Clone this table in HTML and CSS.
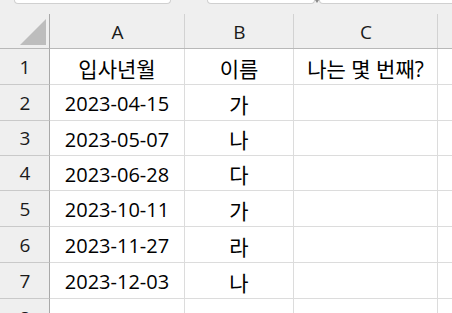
FILE: index.html
```html
<!DOCTYPE html>
<html lang="ko">
<head>
<meta charset="utf-8">
<link rel="stylesheet" href="styles.css">
</head>
<body>
<div class="top">
  <div class="box box-name"></div>
  <div class="box box-mid"></div>
  <div class="notch"></div>
  <div class="box box-formula"></div>
</div>
<div class="sheet">
  <div class="corner"><svg width="49" height="34" viewBox="0 0 49 34"><polygon points="20,31 46,5 46,31" fill="#bdbdbd"/></svg></div>
  <div class="colhead">A</div>
  <div class="colhead">B</div>
  <div class="colhead">C</div>
  <div class="colhead last"></div>

  <div class="rowhead">1</div>
  <div class="cell ko">입사년월</div>
  <div class="cell ko">이름</div>
  <div class="cell ko">나는 몇 번째?</div>
  <div class="cell last"></div>

  <div class="rowhead">2</div>
  <div class="cell">2023-04-15</div>
  <div class="cell ko">가</div>
  <div class="cell"></div>
  <div class="cell last"></div>

  <div class="rowhead">3</div>
  <div class="cell">2023-05-07</div>
  <div class="cell ko">나</div>
  <div class="cell"></div>
  <div class="cell last"></div>

  <div class="rowhead">4</div>
  <div class="cell">2023-06-28</div>
  <div class="cell ko">다</div>
  <div class="cell"></div>
  <div class="cell last"></div>

  <div class="rowhead">5</div>
  <div class="cell">2023-10-11</div>
  <div class="cell ko">가</div>
  <div class="cell"></div>
  <div class="cell last"></div>

  <div class="rowhead">6</div>
  <div class="cell">2023-11-27</div>
  <div class="cell ko">라</div>
  <div class="cell"></div>
  <div class="cell last"></div>

  <div class="rowhead">7</div>
  <div class="cell">2023-12-03</div>
  <div class="cell ko">나</div>
  <div class="cell"></div>
  <div class="cell last"></div>

  <div class="rowhead partial"><span>8</span></div>
  <div class="cell"></div>
  <div class="cell"></div>
  <div class="cell"></div>
  <div class="cell last"></div>
</div>
</body>
</html>
```
FILE: styles.css
```css
html, body {
  margin: 0;
  padding: 0;
  background: #ffffff;
  overflow: hidden;
}
body {
  width: 452px;
  height: 313px;
  font-family: "Open Sans", "Noto Sans CJK KR", sans-serif;
  color: #000;
}
.top {
  height: 14px;
  background: #efefef;
  display: flex;
  align-items: flex-start;
}
.box {
  height: 4px;
  background: #fff;
  border: 1px solid #d0d0d0;
  border-top: none;
  border-radius: 0 0 6px 6px;
  box-sizing: border-box;
}
.box-name { margin-left: 14px; width: 157px; }
.box-mid { margin-left: 36px; width: 108px; }
.notch {
  width: 4px;
  height: 3px;
  background: #8a8a8a;
  clip-path: polygon(50% 100%, 0 0, 100% 0);
}
.box-formula { flex: 1; margin-right: -10px; }

.sheet {
  display: grid;
  grid-template-columns: 50px 135px 109px 144px 1fr;
  grid-template-rows: 35px 36px 36px 35px 35px 36px 36px 36px 15px;
  overflow: hidden;
}
.corner {
  background: #efefef;
  border-right: 1px solid #a9a9a9;
  border-bottom: 1px solid #b8b8b8;
  box-sizing: border-box;
}
.corner svg { display: block; }
.colhead {
  background: #efefef;
  border-bottom: 1px solid #b8b8b8;
  box-sizing: border-box;
  position: relative;
  display: flex;
  align-items: center;
  justify-content: center;
  font-size: 19px;
  color: #1a1a1a;
  padding-top: 2px;
}
.colhead::after {
  content: "";
  position: absolute;
  right: 0;
  top: 0;
  bottom: 0;
  width: 1px;
  background: #d2d2d2;
}
.colhead.last::after { display: none; }
.rowhead {
  background: #efefef;
  border-right: 1px solid #a9a9a9;
  border-bottom: 1px solid #c9c9c9;
  box-sizing: border-box;
  display: flex;
  align-items: center;
  justify-content: center;
  font-size: 19px;
  color: #1a1a1a;
  padding-left: 1px;
  overflow: hidden;
}
.rowhead.partial {
  align-items: flex-start;
  border-bottom: none;
}
.rowhead.partial span {
  display: block;
  line-height: 36px;
  margin-top: 1px;
  height: 36px;
}
.cell {
  border-right: 1px solid #dcdcdc;
  border-bottom: 1px solid #dcdcdc;
  box-sizing: border-box;
  display: flex;
  align-items: center;
  justify-content: center;
  font-size: 20px;
  white-space: nowrap;
  padding-top: 2px;
}
.cell.ko { font-size: 21px; }
.cell.last { border-right: none; }
```
